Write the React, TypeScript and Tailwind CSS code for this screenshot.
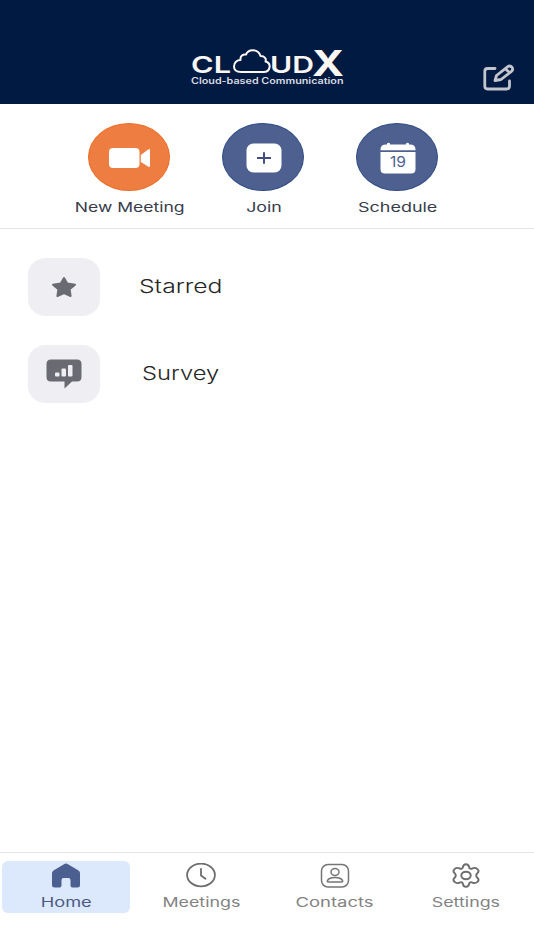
import React, { useState } from 'react';

type TabId = 'home' | 'meetings' | 'contacts' | 'settings';

// Brand logo
const Logo: React.FC = () => (
  <svg width="160" height="50" viewBox="0 -10 160 50" fill="#fbf6f2" fontFamily="Inter, sans-serif" aria-label="CloudX">
    <text x="0" y="24.500" fontSize="23" fontWeight="600" textLength="40" lengthAdjust="spacingAndGlyphs">CL</text>
    <path
      d="M50 24C45 24 43 21.500 43 18.500C43 14.500 46 12 49.500 12C49 8 52 6 55 6.500C57.500 0.500 67 0.500 69.500 8C74 8 75.500 11 74.500 13.500C78 14.500 79 17 78.500 19.500C78 22.500 75.500 24 72.500 24Z"
      fill="none"
      stroke="#fbf6f2"
      strokeWidth="2"
      strokeLinejoin="round"
    />
    <text x="79" y="24.500" fontSize="23" fontWeight="600" textLength="44" lengthAdjust="spacingAndGlyphs">UD</text>
    <text x="121" y="27.500" fontSize="35" fontWeight="700" textLength="32" lengthAdjust="spacingAndGlyphs">X</text>
    <text x="0" y="36" fontSize="8.500" fontWeight="600" fill="#d9dbe2" textLength="152.500" lengthAdjust="spacingAndGlyphs">
      Cloud-based Communication
    </text>
  </svg>
);

const EditIcon = () => (
  <svg width="32" height="28" viewBox="0 0 32 28" fill="none" stroke="#c3c6cd" strokeWidth="2.800" strokeLinecap="round" strokeLinejoin="round">
    <path d="M12 4.500H4.500Q1.800 4.500 1.800 7.500V22Q1.800 25 4.500 25H23.500Q26.500 25 26.500 22V17" />
    <path d="M12 16.500L13.500 11.500L24.500 2.800Q27 1 29 3.200Q30.500 5.500 28.500 7.300L18 15.500ZM22.500 5L26.500 8.500" strokeWidth="2.800" />
  </svg>
);

const VideoIcon = () => (
  <svg width="42" height="22" viewBox="0 0 42 22" fill="#fff">
    <rect x="0" y="1" width="30.500" height="20" rx="4" />
    <path d="M31.800 8L39.500 2.300Q41 1.500 41 3.300V18.700Q41 20.500 39.500 19.700L31.800 15Z" />
  </svg>
);

const PlusIcon = () => (
  <svg width="36" height="30" viewBox="0 0 36 30">
    <rect x="0.500" y="0.500" width="35" height="29" rx="7" fill="#fff" />
    <path d="M11 15H25M18 9.200V20.800" stroke="#434e80" strokeWidth="2" />
  </svg>
);

const CalendarIcon = () => (
  <svg width="36" height="32" viewBox="0 0 36 32" fill="#fff">
    <path d="M0.500 7.500Q0.500 2.500 6 2.500H7V1.500Q8.500 0 10 1.500V2.500H26V1.500Q27.500 0 29 1.500V2.500H30Q35.500 2.500 35.500 7.500V8.200H0.500Z" />
    <path d="M0.500 10H35.500V27Q35.500 31.500 31 31.500H5Q0.500 31.500 0.500 27Z" />
    <text x="10" y="25" fontSize="14" fontWeight="400" fontFamily="Inter, sans-serif" fill="#4d6090" textLength="16" lengthAdjust="spacingAndGlyphs">19</text>
  </svg>
);

const StarIcon = () => (
  <svg width="26" height="22" viewBox="0 0 26 22" fill="#6a6a73" stroke="#6a6a73" strokeWidth="2" strokeLinejoin="round">
    <path d="M13 2L16.200 7.600L24 8.800L18.600 13.300L19.600 20L13 17L6.400 20L7.400 13.300L2 8.800L9.800 7.600Z" />
  </svg>
);

const SurveyIcon = () => (
  <svg width="36" height="30" viewBox="0 0 36 30">
    <path d="M5 0.500H31Q35.500 0.500 35.500 5V18Q35.500 22.500 31 22.500H26L18.500 29.500V22.500H5Q0.500 22.500 0.500 18V5Q0.500 0.500 5 0.500Z" fill="#6a6a73" />
    <g fill="#efeef3">
      <rect x="9" y="13.500" width="4.500" height="4" rx="1" />
      <rect x="15.500" y="9.500" width="4.500" height="8" rx="1" />
      <rect x="22" y="6" width="4.500" height="11.500" rx="1" />
    </g>
  </svg>
);

const HomeIcon = () => (
  <svg width="30" height="25" viewBox="0 0 30 25" fill="#4c5f91">
    <path d="M13 1.200Q15 0 17 1.200L27.500 7.500Q29 8.500 29 10V22Q29 24.500 26.500 24.500H21.500Q19.500 24.500 19.500 22.500V17Q19.500 15 17.500 15H12.500Q10.500 15 10.500 17V22.500Q10.500 24.500 8.500 24.500H3.500Q1 24.500 1 22V10Q1 8.500 2.500 7.500Z" />
  </svg>
);

const ClockIcon = () => (
  <svg width="30" height="25" viewBox="0 0 30 25" fill="none" stroke="#6d6d6d" strokeWidth="1.800" strokeLinecap="round" strokeLinejoin="round">
    <ellipse cx="15" cy="12" rx="13.900" ry="11.400" />
    <path d="M15 6V12.500L19.500 15.800" />
  </svg>
);

const ContactIcon = () => (
  <svg width="30" height="25" viewBox="0 0 30 25" fill="none" stroke="#757575" strokeWidth="1.500">
    <rect x="1.500" y="1.500" width="27" height="22.500" rx="6.500" />
    <ellipse cx="15" cy="9" rx="4" ry="3.400" />
    <path d="M8.500 19H21.500Q23.200 19 22.500 17.500Q20.800 14.600 15 14.600Q9.200 14.600 7.500 17.500Q6.800 19 8.500 19Z" />
  </svg>
);

const GearIcon = () => (
  <svg width="30" height="25" viewBox="0 0 30 26" preserveAspectRatio="none" fill="none" stroke="#6d6d6d" strokeWidth="2" strokeLinejoin="round">
    <path d="M12 4C12.500 0.300 17.500 0.300 18 4C18.300 6 19.800 6.600 21.500 5.600C25 3.800 29.500 7.800 26.600 10.300C24.800 12 24.800 14 26.600 15.700C29.500 18.200 25 22.200 21.500 20.400C19.800 19.400 18.300 20 18 22C17.500 25.700 12.500 25.700 12 22C11.700 20 10.200 19.400 8.500 20.400C5 22.200 0.500 18.200 3.400 15.700C5.200 14 5.200 12 3.400 10.300C0.500 7.800 5 3.800 8.500 5.600C10.200 6.600 11.700 6 12 4Z" />
    <ellipse cx="15" cy="13" rx="4.700" ry="3.900" />
  </svg>
);

interface ActionProps {
  label: string;
  color: string;
  stretch: string;
  children: React.ReactNode;
}

const Action: React.FC<ActionProps> = ({ label, color, stretch, children }) => (
  <button className="flex w-[134px] flex-col items-center">
    <span className={`flex h-[68px] w-[82px] items-center justify-center rounded-[50%] border pt-px pl-px ${color}`}>
      {children}
    </span>
    <span className={`mt-[6px] ml-[2px] whitespace-nowrap text-[13px] leading-5 text-[#373b4b] ${stretch}`}>{label}</span>
  </button>
);

interface RowProps {
  label: string;
  indent: string;
  stretch: string;
  children: React.ReactNode;
}

const Row: React.FC<RowProps> = ({ label, indent, stretch, children }) => (
  <button className="flex items-center">
    <span className="flex h-[58px] w-[72px] items-center justify-center rounded-[18px/16px] bg-[#efeef3]">
      {children}
    </span>
    <span className={`origin-left text-[19px] leading-7 font-light text-[#262626] ${indent} ${stretch}`}>{label}</span>
  </button>
);

const tabs: { id: TabId; label: string; icon: React.ReactNode; box: string; stretch: string }[] = [
  { id: 'home', label: 'Home', icon: <HomeIcon />, box: 'ml-[2px] w-32', stretch: 'scale-x-[1.4]' },
  { id: 'meetings', label: 'Meetings', icon: <ClockIcon />, box: 'ml-[7px] w-32', stretch: 'scale-x-[1.37]' },
  { id: 'contacts', label: 'Contacts', icon: <ContactIcon />, box: 'ml-[6px] w-32', stretch: 'scale-x-[1.42]' },
  { id: 'settings', label: 'Settings', icon: <GearIcon />, box: 'ml-[3px] w-32', stretch: 'scale-x-[1.37]' },
];

export default function App() {
  const [active, setActive] = useState<TabId>('home');

  return (
    <div className="flex h-[950px] w-[534px] flex-col overflow-hidden bg-white font-[Inter,sans-serif]">
      <header className="flex h-[104px] shrink-0 items-start justify-between bg-[#001a41] pt-[38px] pl-[191px]">
        <Logo />
        <button className="mt-[26px] mr-[19px]" aria-label="Edit">
          <EditIcon />
        </button>
      </header>

      {/* Quick actions */}
      <section className="flex h-[125px] shrink-0 border-b border-[#e2e6e9] pt-[19px] pl-[62px]">
        <Action label="New Meeting" color="border-[#ec6d27] bg-[#ee7d42]" stretch="scale-x-[1.35]">
          <VideoIcon />
        </Action>
        <Action label="Join" color="border-[#304c86] bg-[#4d6090]" stretch="scale-x-[1.37]">
          <PlusIcon />
        </Action>
        <Action label="Schedule" color="border-[#304c86] bg-[#4d6090]" stretch="scale-x-[1.38]">
          <CalendarIcon />
        </Action>
      </section>

      <main className="flex flex-1 flex-col items-start gap-[28.5px] pt-[29px] pl-7">
        <Row label="Starred" indent="ml-[39px]" stretch="scale-x-[1.3]">
          <StarIcon />
        </Row>
        <Row label="Survey" indent="ml-[42px]" stretch="scale-x-[1.25]">
          <SurveyIcon />
        </Row>
      </main>

      {/* Bottom tab bar */}
      <nav className="flex h-[98px] shrink-0 items-start border-t border-[#e2e6e9] pt-2">
        {tabs.map((tab) => (
          <button
            key={tab.id}
            onClick={() => setActive(tab.id)}
            className={`flex h-[52px] flex-col items-center rounded-md pt-[2px] ${tab.box} ${
              active === tab.id ? 'bg-[#dce8fc] text-[#4c5a83]' : 'text-[#828282]'
            }`}
          >
            {tab.icon}
            <span className={`mt-1 text-[13px] leading-5 ${tab.stretch}`}>{tab.label}</span>
          </button>
        ))}
      </nav>
    </div>
  );
}
